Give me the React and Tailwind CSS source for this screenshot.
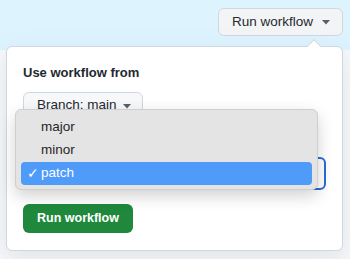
import React from "react";

const Caret = ({ className = "" }) => (
  <svg width="8" height="5" viewBox="0 0 8 5" className={className}>
    <path d="M0 0h8L4 4.5z" fill="currentColor" />
  </svg>
);

export default function App() {
  const options = ["major", "minor", "patch"];
  const selected = "patch";

  return (
    <div
      className="relative w-[350px] h-[259px] overflow-hidden bg-[#f6f8fa] text-[#24292f]"
      style={{ fontFamily: '"Liberation Sans", Arial, sans-serif' }}
    >
      {/* Banner with trigger */}
      <div className="h-[50px] bg-[#ddf4ff] flex justify-end items-start pt-2 pr-[7px]">
        <button className="h-[28px] pl-[13px] pr-[12px] flex items-center gap-[9px] rounded-md border border-[#d0d7de] bg-[#f3f4f6] text-[13.5px] font-medium text-[#24292f]">
          Run workflow
          <Caret className="text-[#57606a] mt-[1px]" />
        </button>
      </div>

      {/* Dropdown panel */}
      <div className="absolute left-[6px] top-[46px] w-[337px] h-[205px] rounded-md border border-[#d0d7de] bg-white shadow-[0_8px_24px_rgba(140,149,159,0.2)]">
        <div className="absolute -top-[6px] right-[23px] w-[10px] h-[10px] rotate-45 bg-white border-l border-t border-[#d0d7de]" />
        <div className="relative p-4 flex flex-col">
          <div className="text-[13px] font-bold leading-5">Use workflow from</div>
          <div className="mt-[9px]">
            <button className="h-[28px] pl-[13px] pr-[11px] flex items-center gap-[6px] rounded-md border border-[#d0d7de] bg-[#f6f8fa] text-[13.5px] text-[#24292f]">
              <span className="-mt-[2px]">Branch: main</span>
              <Caret className="text-[#57606a]" />
            </button>
          </div>
          <div className="mt-[37px] h-[33px] rounded-md border-2 border-[#2b6ad6] bg-white" />
          <div className="mt-[14px]">
            <button className="h-[29px] px-[14px] rounded-md bg-[#1f883d] text-white text-[12.5px] font-bold">
              Run workflow
            </button>
          </div>
        </div>
      </div>

      {/* Native select popup */}
      <div className="absolute left-[15px] top-[109px] w-[303px] h-[81px] rounded-md border border-[#cfcfcf] bg-[#e4e4e4] shadow-[0_6px_16px_rgba(0,0,0,0.18)] pt-[6px] px-[5px] flex flex-col">
        {options.map((o) => {
          const active = o === selected;
          return (
            <div
              key={o}
              className={`h-[23px] flex items-center rounded-[4px] text-[13.5px] ${
                active ? "bg-[#4f9bfa] text-white" : "text-[#262626]"
              }`}
            >
              <span className="w-[20px] pl-[6px] text-[14px]">{active ? "✓" : ""}</span>
              {o}
            </div>
          );
        })}
      </div>
    </div>
  );
}
